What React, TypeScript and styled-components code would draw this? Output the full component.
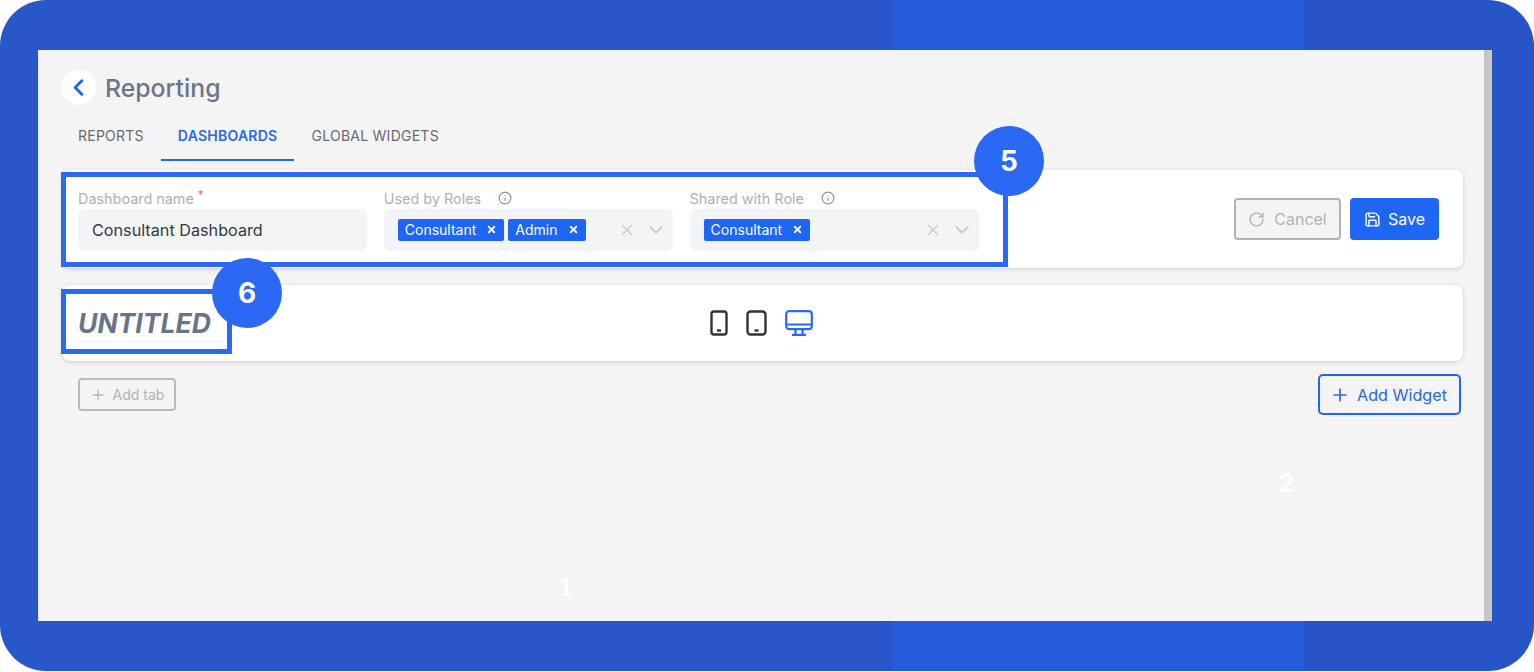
import React from "react";
import styled, { createGlobalStyle } from "styled-components";
import { ChevronDown, ChevronLeft, Info, Plus, RotateCw, Save, X } from "lucide-react";

const Global = createGlobalStyle`
  html, body { margin: 0; padding: 0; background: #fff; }
  body { font-family: Inter, "Liberation Sans", sans-serif; width: 1534px; height: 672px; overflow: hidden; }
`;

const Frame = styled.div`
  width: 1534px;
  height: 671px;
  box-sizing: border-box;
  padding: 50px 42px 50px 38px;
  border-radius: 46px;
  background: linear-gradient(to right, #2757c8 0, #2757c8 894px, #255cdb 894px, #255cdb 1304px, #2555c6 1304px);
`;

const Panel = styled.main`
  position: relative;
  height: 571px;
  box-sizing: border-box;
  padding: 20px 21px 0 24px;
  background: #f4f4f4;
  border-right: 8px solid #c6c6c6;
  box-shadow: inset 1px 0 0 #e4e8f2;
`;

const Header = styled.header`
  display: flex;
  align-items: center;
  gap: 9px;
  height: 35px;
  margin-left: -1px;
`;

const BackButton = styled.button`
  width: 35px;
  height: 35px;
  padding: 0;
  border: 0;
  border-radius: 50%;
  background: #fff;
  color: #1f66f4;
  display: flex;
  align-items: center;
  justify-content: center;
`;

const Title = styled.h1`
  margin: 0;
  font-size: 24.8px;
  font-weight: 500;
  color: #6b7789;
`;

const Tabs = styled.nav`
  display: flex;
  margin: 9px 0 0 -1px;
  height: 47px;
`;

const Tab = styled.div<{ $active?: boolean }>`
  box-sizing: border-box;
  height: 47px;
  padding: 13px 17px 0;
  font-size: 14px;
  line-height: 18px;
  letter-spacing: 0.25px;
  font-weight: ${(p) => (p.$active ? 600 : 400)};
  color: ${(p) => (p.$active ? "#2b68e8" : "#666a70")};
  border-bottom: ${(p) => (p.$active ? "2px solid #2468f2" : "2px solid transparent")};
`;

const Card = styled.section`
  position: relative;
  background: #fff;
  border-radius: 8px;
  box-shadow: 0 1px 4px rgba(0, 0, 0, 0.16);
`;

const FormCard = styled(Card)`
  height: 98px;
  margin-top: 9px;
  box-sizing: border-box;
  padding: 0 24px 0 16px;
  display: flex;
  align-items: center;
  justify-content: space-between;
`;

const Fields = styled.div`
  display: flex;
  gap: 16.8px;
`;

const Field = styled.div`
  width: 289px;
`;

const Label = styled.label`
  display: flex;
  align-items: center;
  gap: 5px;
  height: 21px;
  box-sizing: border-box;
  font-size: 14.4px;
  color: #adb0b7;
`;

const InfoIcon = styled(Info)`
  margin-left: 12px;
  color: #8f9298;
`;

const Required = styled.sup`
  color: #f0696a;
  font-size: 12px;
  line-height: 0;
  margin-left: -1px;
  position: relative;
  top: -3px;
`;

const InputBox = styled.div`
  height: 42px;
  box-sizing: border-box;
  background: #f3f4f6;
  border-radius: 6px;
  display: flex;
  align-items: center;
  padding: 0 14px;
  font-size: 16.2px;
  color: #353a40;
`;

const TagBox = styled(InputBox)`
  gap: 4px;
  padding: 0 6px 0 14px;
`;

const Tag = styled.span`
  height: 22px;
  box-sizing: border-box;
  display: inline-flex;
  align-items: center;
  gap: 10px;
  padding: 0 7px;
  border-radius: 2px;
  background: #1e66f5;
  color: #fff;
  font-size: 14px;
`;

const TagClose = styled(X)`
  stroke-width: 4;
`;

const Controls = styled.div`
  margin-left: auto;
  display: flex;
  align-items: center;
  gap: 9px;
  color: #c8cacd;
`;

const Actions = styled.div`
  display: flex;
  gap: 9px;
`;

const ActionButton = styled.button`
  height: 42px;
  box-sizing: border-box;
  border-radius: 4px;
  display: flex;
  align-items: center;
  justify-content: center;
  gap: 9px;
  font-family: inherit;
  font-size: 16px;
`;

const CancelButton = styled(ActionButton)`
  width: 107px;
  background: #f4f4f4;
  border: 2px solid #b0b2b8;
  color: #b1b3b9;
`;

const SaveButton = styled(ActionButton)`
  width: 89px;
  background: #1e66f5;
  border: 0;
  color: #fff;
  gap: 7px;
`;

const TitleCard = styled(Card)`
  height: 76px;
  margin-top: 17px;
  box-sizing: border-box;
  display: flex;
  align-items: center;
`;

const TabName = styled.div`
  width: 648px;
  box-sizing: border-box;
  padding: 0 0 0 16px;
  font-size: 26.5px;
  font-weight: 700;
  font-style: italic;
  color: #687488;
`;

const Devices = styled.div`
  display: flex;
  align-items: center;
  gap: 18px;
  margin-top: -1px;
  color: #333;
`;

const Bottom = styled.div`
  display: flex;
  justify-content: space-between;
  padding: 13px 2px 0 16px;
`;

const AddTab = styled.button`
  width: 98px;
  height: 33px;
  margin-top: 4px;
  box-sizing: border-box;
  border: 2px solid #b8bac2;
  border-radius: 4px;
  background: transparent;
  color: #b0b2b8;
  display: flex;
  align-items: center;
  justify-content: center;
  gap: 7px;
  font-family: inherit;
  font-size: 14px;
`;

const AddWidget = styled.button`
  width: 143px;
  height: 41px;
  box-sizing: border-box;
  border: 2px solid #1e66f5;
  border-radius: 5px;
  background: transparent;
  color: #2c66e4;
  display: flex;
  align-items: center;
  gap: 7px;
  padding: 0 0 0 10px;
  font-family: inherit;
  font-size: 16.2px;
`;

const Highlight = styled.div<{ $w: number; $h: number; $t: number }>`
  position: absolute;
  left: -1px;
  top: ${(p) => p.$t}px;
  width: ${(p) => p.$w}px;
  height: ${(p) => p.$h}px;
  box-sizing: border-box;
  border: 5px solid #2b69f5;
  pointer-events: none;
`;

const Badge = styled.div<{ $r: number; $t: number }>`
  position: absolute;
  right: ${(p) => p.$r}px;
  top: ${(p) => p.$t}px;
  width: 70px;
  height: 70px;
  border-radius: 50%;
  background: #2b69f5;
  color: #fff;
  font-family: Inter, sans-serif;
  font-size: 28px;
  font-weight: 700;
  display: flex;
  align-items: center;
  justify-content: center;
`;

const Ghost = styled.span<{ $l: number; $t: number }>`
  position: absolute;
  left: ${(p) => p.$l}px;
  top: ${(p) => p.$t}px;
  color: #fff;
  font-size: 26px;
  font-weight: 700;
  font-family: Lato, Inter, sans-serif;
  line-height: 30px;
`;

const Phone = () => (
  <svg width="18" height="26" viewBox="0 0 18 26" fill="none" stroke="currentColor" strokeWidth="2.4">
    <rect x="1.5" y="1.5" width="15" height="23" rx="2.5" />
    <path d="M7 20.5h4" />
  </svg>
);

const Tablet = () => (
  <svg width="21" height="26" viewBox="0 0 21 26" fill="none" stroke="currentColor" strokeWidth="2.4">
    <rect x="1.5" y="1.5" width="18" height="23" rx="3" />
    <path d="M8.5 20.5h4" />
  </svg>
);

const DesktopSvg = styled.svg`
  color: #2b69f5;
`;

const Desktop = () => (
  <DesktopSvg width="28" height="26" viewBox="0 0 28 26" fill="none" stroke="currentColor" strokeWidth="2.2">
    <rect x="1.2" y="1.2" width="25.6" height="18" rx="3" />
    <path d="M1.2 14.5h25.6M10.5 19.5v5M17.5 19.5v5M7 24.8h14" />
  </DesktopSvg>
);

export default function App() {
  return (
    <Frame>
      <Global />
      <Panel>
        <Header>
          <BackButton aria-label="Back"><ChevronLeft size={27} strokeWidth={2.6} /></BackButton>
          <Title>Reporting</Title>
        </Header>
        <Tabs>
          <Tab>REPORTS</Tab>
          <Tab $active>DASHBOARDS</Tab>
          <Tab>GLOBAL WIDGETS</Tab>
        </Tabs>
        <FormCard>
          <Fields>
            <Field>
              <Label>Dashboard name <Required>*</Required></Label>
              <InputBox>Consultant Dashboard</InputBox>
            </Field>
            <Field>
              <Label>Used by Roles <InfoIcon size={14} /></Label>
              <TagBox>
                <Tag>Consultant <TagClose size={11} /></Tag>
                <Tag>Admin <TagClose size={11} /></Tag>
                <Controls><X size={18} /><ChevronDown size={22} /></Controls>
              </TagBox>
            </Field>
            <Field>
              <Label>Shared with Role <InfoIcon size={14} /></Label>
              <TagBox>
                <Tag>Consultant <TagClose size={11} /></Tag>
                <Controls><X size={18} /><ChevronDown size={22} /></Controls>
              </TagBox>
            </Field>
          </Fields>
          <Actions>
            <CancelButton><RotateCw size={17} />Cancel</CancelButton>
            <SaveButton><Save size={17} />Save</SaveButton>
          </Actions>
          <Highlight $t={2} $w={947} $h={95}>
            <Badge $r={-41} $t={-51}>5</Badge>
          </Highlight>
        </FormCard>
        <TitleCard>
          <TabName>UNTITLED</TabName>
          <Devices>
            <Phone />
            <Tablet />
            <Desktop />
          </Devices>
          <Highlight $t={4} $w={171} $h={65}>
            <Badge $r={-55} $t={-36}>6</Badge>
          </Highlight>
        </TitleCard>
        <Bottom>
          <AddTab><Plus size={16} />Add tab</AddTab>
          <AddWidget><Plus size={20} />Add Widget</AddWidget>
        </Bottom>
        <Ghost $l={520} $t={521}>1</Ghost>
        <Ghost $l={1241} $t={417}>2</Ghost>
      </Panel>
    </Frame>
  );
}
